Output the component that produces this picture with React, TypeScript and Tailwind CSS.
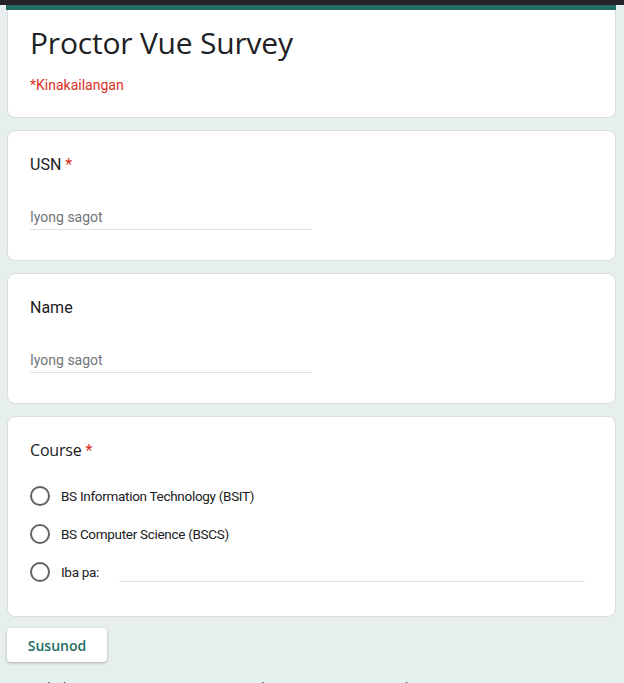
import React from "react";

function Radio({ label, other }: { label: string; other?: boolean }) {
  return (
    <div className="flex items-center h-[38px]">
      <div className="w-[20px] h-[20px] shrink-0 rounded-full border-2 border-[#5f6368] box-border" />
      <span className="ml-[11px] text-[13.5px] tracking-[-0.3px] text-[#202124] font-['Roboto']">{label}</span>
      {other && <div className="ml-[20px] flex-1 mr-[8px] h-[18px] border-b border-[#e0e0e0] self-end mb-[9px]" />}
    </div>
  );
}

function Card({ children, className = "" }: { children: React.ReactNode; className?: string }) {
  return (
    <div className={"bg-white border border-[#dadce0] rounded-[8px] px-[22px] " + className}>{children}</div>
  );
}

export default function App() {
  return (
    <div className="min-h-[683px] h-[683px] overflow-hidden bg-[#e6efed] font-['Roboto']">
      <div className="h-[5px] bg-[#232228]" />
      <div className="px-[7px] pr-[8px]">
        <div className="h-[5px] bg-[#216b61] -ml-[1px]" />
        <div className="bg-white border border-t-0 border-[#dadce0] rounded-b-[8px] px-[22px] pt-[13px] pb-[22px]">
          <h1 className="text-[30px] leading-[40px] text-[#202124] font-['Open_Sans'] tracking-[-0.2px]">Proctor Vue Survey</h1>
          <div className="mt-[12px] text-[14px] leading-[20px] text-[#d93025]">*Kinakailangan</div>
        </div>

        <Card className="mt-[12px] h-[131px] pt-[22px]">
          <div className="text-[16px] leading-[24px] text-[#202124]">
            USN <span className="text-[#d93025]">*</span>
          </div>
          <div className="mt-[30px] w-[282px] border-b border-[#e0e0e0] pb-[2px] text-[14px] leading-[20px] text-[#70757a]">
            Iyong sagot
          </div>
        </Card>

        <Card className="mt-[12px] h-[131px] pt-[22px]">
          <div className="text-[16px] leading-[24px] text-[#202124]">Name</div>
          <div className="mt-[30px] w-[282px] border-b border-[#e0e0e0] pb-[2px] text-[14px] leading-[20px] text-[#70757a]">
            Iyong sagot
          </div>
        </Card>

        <Card className="mt-[12px] h-[201px] pt-[21px]">
          <div className="text-[16px] leading-[24px] text-[#202124] font-['Open_Sans'] tracking-[-0.2px]">
            Course <span className="text-[#d93025] font-['Roboto']">*</span>
          </div>
          <div className="mt-[14px]">
            <Radio label="BS Information Technology (BSIT)" />
            <Radio label="BS Computer Science (BSCS)" />
            <Radio label="Iba pa:" other />
          </div>
        </Card>

        <button className="mt-[11px] w-[100px] h-[34px] bg-white rounded-[4px] shadow-[0_1px_3px_rgba(60,64,67,0.35)] text-[14px] font-semibold text-[#1e6b62] font-['Open_Sans']">
          Susunod
        </button>

        <div className="mt-[18px] text-[12px] leading-[16px] text-[#202124]">
          Huwag kailanman magsumite ng mga password sa pamamagitan ng Google Forms.
        </div>
      </div>
    </div>
  );
}
